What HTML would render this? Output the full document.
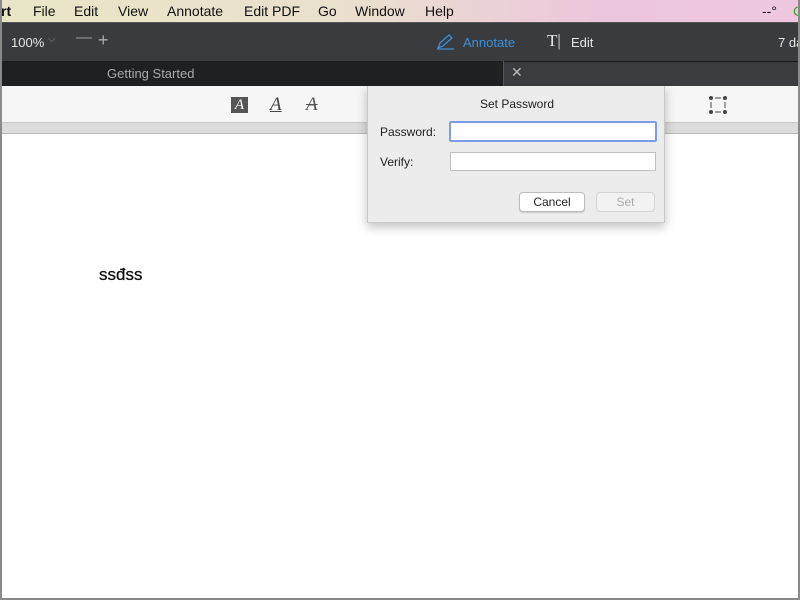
<!DOCTYPE html>
<html><head><style>
*{margin:0;padding:0;box-sizing:border-box}
body{width:800px;height:600px;overflow:hidden;background:#fff;font-family:"Liberation Sans",sans-serif;position:relative}
.abs{position:absolute;white-space:nowrap}
#frame{left:0;top:0;width:800px;height:600px;border-left:2px solid #8a8a8a;border-right:2px solid #8a8a8a;border-bottom:2px solid #8a8a8a;pointer-events:none;z-index:9}
#menu{left:0;top:0;width:800px;height:23px;background:linear-gradient(90deg,#e9e6c6 0%,#eadfcf 45%,#ecc6dc 75%,#efc8e0 100%);border-bottom:1px solid #555;font-size:14px;color:#111}
#menu span{position:absolute;top:3px}
#tb{left:0;top:23px;width:800px;height:38px;background:#3a3b3e;color:#e6e6e6;font-size:13px}
#tabs{left:0;top:61px;width:800px;height:25px;background:#3b3c3f;border-top:1px solid #1a1a1a}
#tabl{left:0;top:61px;width:504px;height:25px;background:#1f2022;border-right:1px solid #555;color:#aaa;font-size:13px}
#ltb{left:0;top:86px;width:800px;height:37px;background:#f6f6f6;border-bottom:1px solid #c8c8c8}
#strip{left:0;top:123px;width:800px;height:11px;background:#dcdcdc;border-bottom:1px solid #bbb}
#dlg{left:367px;top:86px;width:298px;height:137px;background:#ececec;border:1px solid #c8c8c8;border-top:none;box-shadow:0 4px 10px rgba(0,0,0,.25);font-size:12px;color:#222}
.inp{position:absolute;background:#fff;border:1px solid #c0c0c0}
.btn{position:absolute;height:20px;border-radius:4px;text-align:center;line-height:19px;font-size:12px}
</style></head><body>
<div id="menu" class="abs">
<span style="left:1px;font-weight:bold">rt</span><span style="left:33px">File</span><span style="left:74px">Edit</span><span style="left:118px">View</span><span style="left:167px">Annotate</span><span style="left:244px">Edit PDF</span><span style="left:318px">Go</span><span style="left:355px">Window</span><span style="left:425px">Help</span><span style="left:762px">--°</span><span style="left:793px;color:#3a3">C</span>
</div>
<div id="tb" class="abs">
<span class="abs" style="left:11px;top:12px">100%</span>
<span class="abs" style="left:48px;top:11px;color:#888;font-size:10px">⌵</span>
<span class="abs" style="left:76px;top:6px;color:#999;font-size:16px">—</span>
<span class="abs" style="left:98px;top:7px;color:#aaa;font-size:18px">+</span>
<svg class="abs" style="left:436px;top:10px" width="20" height="18"><path d="M2 15 L4 10 L13 2 L16 5 L7 13 Z M1 16 H18" stroke="#3d8fd8" fill="none" stroke-width="1.3"/></svg>
<span class="abs" style="left:463px;top:12px;color:#3d8fd8">Annotate</span>
<span class="abs" style="left:547px;top:8px;font-family:'Liberation Serif',serif;font-size:17px">T|</span>
<span class="abs" style="left:571px;top:12px">Edit</span>
<span class="abs" style="left:778px;top:12px">7 da</span>
</div>
<div id="tabs" class="abs"><span class="abs" style="left:511px;top:2px;color:#bbb;font-size:14px">✕</span></div>
<div id="tabl" class="abs"><span class="abs" style="left:107px;top:5px">Getting Started</span></div>
<div id="ltb" class="abs">
<div class="abs" style="left:231px;top:11px;width:17px;height:16px;background:#555;color:#fff;font-family:'Liberation Serif',serif;font-style:italic;font-size:15px;line-height:16px;text-align:center">A</div>
<span class="abs" style="left:270px;top:8px;font-family:'Liberation Serif',serif;font-style:italic;font-size:19px;color:#444;text-decoration:underline">A</span>
<span class="abs" style="left:306px;top:8px;font-family:'Liberation Serif',serif;font-style:italic;font-size:19px;color:#555;text-decoration:line-through">A</span>
<svg class="abs" style="left:709px;top:10px" width="18" height="18"><g fill="#444"><circle cx="2" cy="2" r="2"/><circle cx="16" cy="2" r="2"/><circle cx="2" cy="16" r="2"/><circle cx="16" cy="16" r="2"/></g><path d="M6 2H12M6 16H12M2 6V12M16 6V12" stroke="#444" stroke-width="1"/></svg>
</div>
<div id="strip" class="abs"></div>
<div class="abs" style="left:99px;top:265px;font-size:17px;color:#111;-webkit-text-stroke:0.3px #111">ssđss</div>
<div id="dlg" class="abs">
<div class="abs" style="left:0;width:298px;top:11px;text-align:center">Set Password</div>
<div class="abs" style="left:12px;top:39px">Password:</div>
<div class="inp" style="left:81px;top:35px;width:208px;height:21px;border:2px solid #7f9ce8;border-radius:2px"></div>
<div class="abs" style="left:12px;top:69px">Verify:</div>
<div class="inp" style="left:82px;top:66px;width:206px;height:19px"></div>
<div class="btn" style="left:151px;top:106px;width:66px;background:#fff;border:1px solid #bdbdbd;box-shadow:0 1px 1px rgba(0,0,0,.15)">Cancel</div>
<div class="btn" style="left:228px;top:106px;width:59px;background:#f2f2f2;border:1px solid #d4d4d4;color:#aaa">Set</div>
</div>
<div id="frame" class="abs"></div>
</body></html>
